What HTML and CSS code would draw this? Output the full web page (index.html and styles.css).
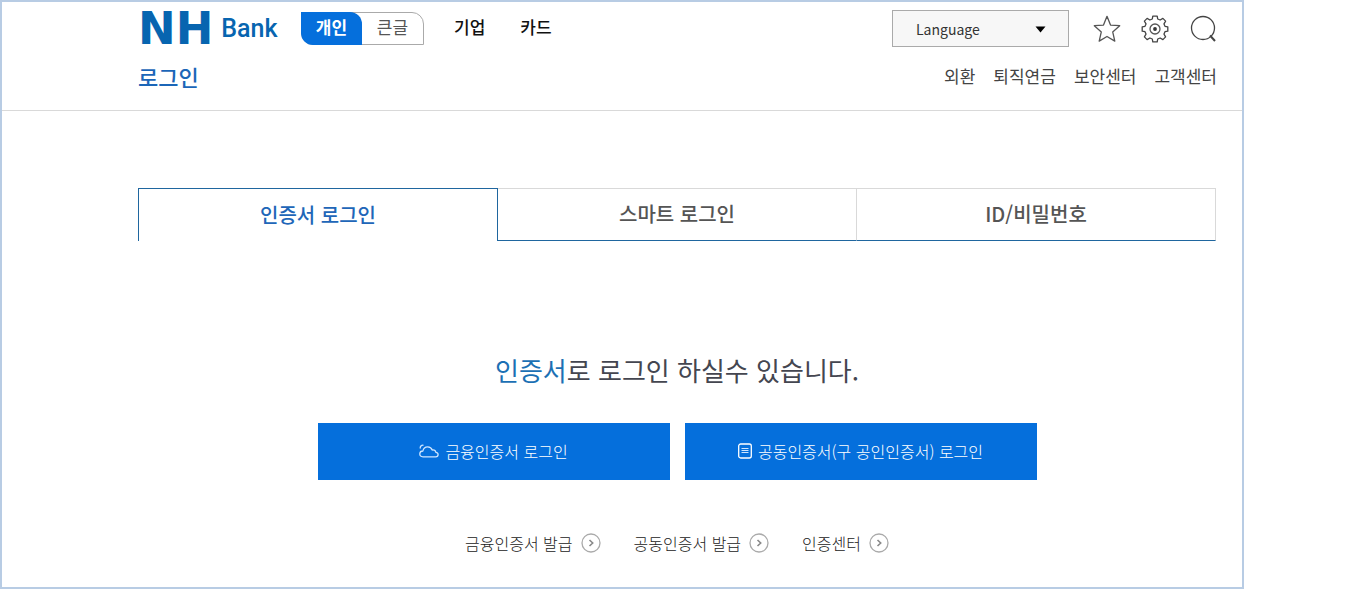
FILE: index.html
```
<!DOCTYPE html>
<html lang="ko">
<head>
  <meta charset="UTF-8">
  <meta name="viewport" content="width=device-width, initial-scale=1.0">
  <title>NH Bank 로그인</title>
  <link rel="stylesheet" href="styles.css">
</head>
<body>
  <div class="frame">
    <header class="header">
      <div class="header-top">
        <a href="#" class="logo"><span class="logo-nh">NH</span><span class="logo-bank">Bank</span></a>
        <div class="view-switch">
          <button type="button" class="view-btn active">개인</button>
          <button type="button" class="view-btn">큰글</button>
        </div>
        <nav class="site-nav">
          <a href="#">기업</a>
          <a href="#">카드</a>
        </nav>
        <div class="tools">
          <div class="language">
            <select aria-label="Language">
              <option>Language</option>
            </select>
            <svg class="language-arrow" width="11" height="7" viewBox="0 0 11 7"><path d="M0.500 0.500h10L5.500 6.500z" fill="#000"/></svg>
          </div>
          <div class="tool-icons">
            <button type="button" class="icon-btn" aria-label="즐겨찾기">
              <svg width="28" height="28" viewBox="0 0 28 28"><path d="M14 1.300l3.500 8.800 9.200.600-7 6.200 2.100 9.200-7.800-4.600-7.800 4.600 2.100-9.200-7-6.200 9.200-.600z" fill="none" stroke="#555" stroke-width="1.300" stroke-linejoin="round"/></svg>
            </button>
            <button type="button" class="icon-btn" aria-label="설정">
              <svg width="28" height="28" viewBox="0 0 28 28">
                <path d="M11.800 1.200h4.400l.5 2.800 2.400 1 2.800-1.600 2.700 2.700-1.600 2.800 1 2.400 2.800.5v4.400l-2.800.5-1 2.400 1.600 2.800-2.700 2.700-2.800-1.600-2.400 1-.5 2.800h-4.400l-.5-2.800-2.400-1-2.800 1.600-2.700-2.700 1.600-2.800-1-2.400-2.800-.5v-4.400l2.800-.5 1-2.400-1.600-2.800 2.700-2.700 2.800 1.600 2.400-1z" fill="none" stroke="#444" stroke-width="1.300" stroke-linejoin="round"/>
                <circle cx="14" cy="14" r="5" fill="none" stroke="#555" stroke-width="1.300"/>
                <circle cx="14" cy="14" r="1.900" fill="#333"/>
              </svg>
            </button>
            <button type="button" class="icon-btn" aria-label="검색">
              <svg width="28" height="28" viewBox="0 0 28 28"><circle cx="14" cy="13" r="11.500" fill="none" stroke="#444" stroke-width="1.300"/><path d="M21 20.500l5 5.500" stroke="#444" stroke-width="2"/></svg>
            </button>
          </div>
        </div>
      </div>
      <div class="header-bottom">
        <h1>로그인</h1>
        <nav class="sub-nav">
          <a href="#">외환</a>
          <a href="#">퇴직연금</a>
          <a href="#">보안센터</a>
          <a href="#">고객센터</a>
        </nav>
      </div>
    </header>

    <main class="content">
      <div class="tabs" role="tablist">
        <button type="button" class="tab active" role="tab" aria-selected="true">인증서 로그인</button>
        <button type="button" class="tab" role="tab" aria-selected="false">스마트 로그인</button>
        <button type="button" class="tab" role="tab" aria-selected="false">ID/비밀번호</button>
      </div>

      <h2><span>인증서</span>로 로그인 하실수 있습니다.</h2>

      <div class="login-buttons">
        <button type="button" class="login-btn">
          <svg width="20" height="14" viewBox="0 0 20 14" fill="none" stroke="#cfe6ff" stroke-width="1.300" stroke-linecap="round" stroke-linejoin="round">
            <path d="M4 12.800c-2.400 0-3.300-1.500-3.200-3C.900 8 2.200 7 3.900 7 4.400 4.200 6.500 2.800 8.700 2.800c2.300 0 3.800 1.200 4.500 3.200 2.200-.300 3.400.600 3.700 2.300 1.300.200 2.200 1 2.200 2.300 0 1.200-.900 2.200-2.300 2.200z"/>
            <path d="M1.200 4C1.200 2.400 2.200 1.200 4 1.200"/>
          </svg>
          금융인증서 로그인
        </button>
        <button type="button" class="login-btn">
          <svg width="14" height="16" viewBox="0 0 14 16" fill="none" stroke="#fff">
            <rect x="0.700" y="1" width="12.600" height="14" rx="2" stroke-width="1.300"/>
            <path d="M3.500 5.500h7M3.500 7.500h7M3.500 9.500h7" stroke="#cfe6ff"/>
          </svg>
          공동인증서(구 공인인증서) 로그인
        </button>
      </div>

      <div class="cert-links">
        <a href="#">금융인증서 발급
          <svg width="20" height="20" viewBox="0 0 20 20" fill="none"><circle cx="10" cy="10" r="9" stroke="#aaa" stroke-width="1.300"/><path d="M8.500 7l3.200 3-3.200 3" stroke="#888" stroke-width="1.600"/></svg>
        </a>
        <a href="#">공동인증서 발급
          <svg width="20" height="20" viewBox="0 0 20 20" fill="none"><circle cx="10" cy="10" r="9" stroke="#aaa" stroke-width="1.300"/><path d="M8.500 7l3.200 3-3.200 3" stroke="#888" stroke-width="1.600"/></svg>
        </a>
        <a href="#">인증센터
          <svg width="20" height="20" viewBox="0 0 20 20" fill="none"><circle cx="10" cy="10" r="9" stroke="#aaa" stroke-width="1.300"/><path d="M8.500 7l3.200 3-3.200 3" stroke="#888" stroke-width="1.600"/></svg>
        </a>
      </div>
    </main>
  </div>
</body>
</html>
```
FILE: styles.css
```
* {
  box-sizing: border-box;
}

body {
  margin: 0;
  background: #fff;
  font-family: "Noto Sans CJK KR", sans-serif;
  color: #444;
}

a {
  color: inherit;
  text-decoration: none;
}

button,
select {
  font-family: inherit;
  cursor: pointer;
}

button {
  padding: 0;
  border: 0;
  background: none;
}

svg {
  display: block;
  flex: none;
}

.frame {
  min-height: 100vh;
  margin-right: 116px;
  border: 2px solid #b8cce4;
}

.header {
  padding: 8px 25px 18px 136px;
  border-bottom: 1px solid #d9d9d9;
}

.header-top,
.header-bottom {
  display: flex;
  align-items: center;
}

.header-top {
  height: 37px;
}

.logo {
  display: flex;
  align-items: center;
  gap: 8px;
  width: 163px;
  line-height: 36px;
  color: #0765b0;
}

.logo-nh {
  font-family: "DejaVu Sans", sans-serif;
  font-size: 45px;
  font-weight: 700;
}

.logo-bank {
  font-family: Roboto, sans-serif;
  font-size: 25px;
  font-weight: 500;
}

.view-switch {
  display: flex;
  height: 33px;
  border: 1px solid #aaa;
  border-radius: 0 12px 0 12px;
}

.view-btn {
  width: 61px;
  padding-bottom: 3px;
  font-size: 17px;
  line-height: 28px;
  color: #555;
}

.view-btn.active {
  margin: -1px 0 -1px -1px;
  border-radius: 0 12px 0 12px;
  background: #056fdc;
  color: #fff;
  font-weight: 700;
}

.site-nav {
  display: flex;
  gap: 35px;
  margin-left: 30px;
  padding-bottom: 3px;
  font-size: 17px;
  font-weight: 500;
  line-height: 32px;
  color: #111;
}

.tools {
  display: flex;
  align-items: center;
  gap: 24px;
  margin-left: auto;
}

.language {
  position: relative;
}

.language select {
  display: block;
  appearance: none;
  width: 177px;
  height: 37px;
  padding: 0 23px;
  border: 1px solid #aaa;
  border-radius: 0;
  background: #f7f7f7;
  font-size: 14px;
  color: #333;
}

.language-arrow {
  position: absolute;
  top: 16px;
  right: 23px;
  pointer-events: none;
}

.tool-icons {
  display: flex;
  gap: 20px;
}

.header-bottom {
  justify-content: space-between;
  padding-top: 13px;
}

h1 {
  margin: 0;
  font-size: 22px;
  font-weight: 500;
  line-height: 32px;
  color: #1b66b8;
}

.sub-nav {
  display: flex;
  gap: 18px;
  font-size: 17px;
  line-height: 32px;
  color: #444;
}

.content {
  padding: 77px 26px 24px 136px;
}

.tabs {
  display: flex;
  height: 53px;
}

.tab {
  flex: 1;
  padding-bottom: 2px;
  border-top: 1px solid #d9d9d9;
  border-right: 1px solid #d9d9d9;
  border-bottom: 1px solid #1f669f;
  font-size: 20px;
  font-weight: 500;
  color: #555;
}

.tab.active {
  border: 1px solid #1f669f;
  border-bottom: 0;
  color: #2166b8;
}

h2 {
  margin: 109px 0 33px;
  text-align: center;
  font-size: 26px;
  font-weight: 400;
  line-height: 40px;
  color: #444650;
}

h2 span {
  color: #1c70b4;
}

.login-buttons {
  display: flex;
  justify-content: center;
  gap: 15px;
}

.login-btn {
  display: flex;
  align-items: center;
  justify-content: center;
  gap: 6px;
  width: 352px;
  height: 57px;
  padding-bottom: 2px;
  background: #056fdc;
  font-size: 16px;
  font-weight: 300;
  color: #fff;
}

.cert-links {
  display: flex;
  justify-content: center;
  gap: 33px;
  margin-top: 51px;
  font-size: 16px;
  font-weight: 300;
  line-height: 24px;
  color: #222;
}

.cert-links a {
  display: flex;
  align-items: center;
  gap: 8px;
}
```
